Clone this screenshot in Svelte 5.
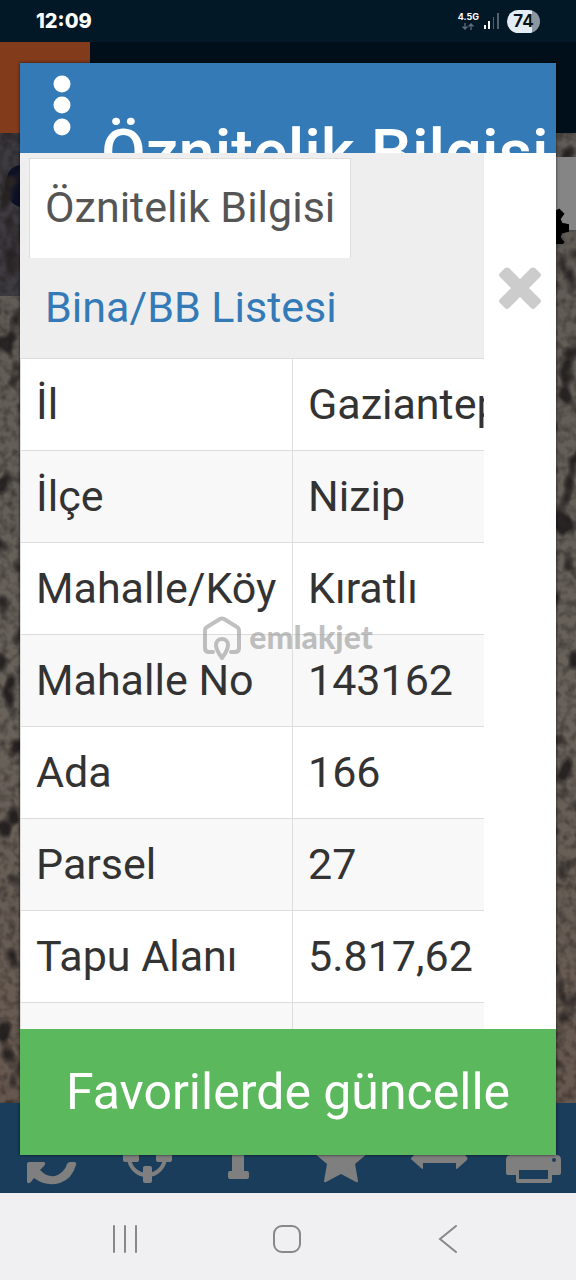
<script>
  const rows = [
    { label: "İl", value: "Gaziantep" },
    { label: "İlçe", value: "Nizip" },
    { label: "Mahalle/Köy", value: "Kıratlı" },
    { label: "Mahalle No", value: "143162" },
    { label: "Ada", value: "166" },
    { label: "Parsel", value: "27" },
    { label: "Tapu Alanı", value: "5.817,62" },
    { label: "", value: "" },
  ];
  const tabs = ["Öznitelik Bilgisi", "Bina/BB Listesi"];
  let active = $state(0);
</script>

<div class="screen">
  <header class="status">
    <span class="time">12:09</span>
    <span class="network">
      4.5G
      <svg width="12" height="7" viewBox="0 0 12 7" fill="none" stroke="#5d6f7b" stroke-width="1.3">
        <path d="M3 0v6M0.500 3.500L3 6l2.500-2.500M9 7V1M6.500 3.500L9 1l2.500 2.500" />
      </svg>
    </span>
    <svg class="signal" width="15" height="17" viewBox="0 0 15 17">
      <path d="M0 12h2v4H0zM4 8h2v8H4z" fill="#fff" />
      <path d="M9 4h1v12H9zM13 0h2v16h-2z" fill="#52616b" />
    </svg>
    <span class="battery">74</span>
  </header>

  <main>
    <div class="topbar"><div class="logo"></div></div>
    <div class="map">
      <svg class="ground" width="100%" height="100%" aria-hidden="true">
        <defs>
          <linearGradient id="soil" x1="0" y1="0" x2="0" y2="1">
            <stop offset="0" stop-color="#5f5a55" />
            <stop offset="0.6" stop-color="#68625a" />
            <stop offset="1" stop-color="#67584f" />
          </linearGradient>
          <filter id="bushes" x="0" y="0" width="100%" height="100%" color-interpolation-filters="sRGB">
            <feTurbulence type="fractalNoise" baseFrequency="0.045 0.035" numOctaves="2" seed="7" />
            <feColorMatrix values="0 0 0 0 0.16  0 0 0 0 0.14  0 0 0 0 0.14  6 0 0 0 -3.3" />
          </filter>
          <filter id="grain" x="0" y="0" width="100%" height="100%" color-interpolation-filters="sRGB">
            <feTurbulence type="fractalNoise" baseFrequency="0.12" numOctaves="2" seed="3" />
            <feColorMatrix values="0 0 0 0 0.1  0 0 0 0 0.09  0 0 0 0 0.08  1 0 0 0 -0.4" />
          </filter>
        </defs>
        <rect width="100%" height="100%" fill="url(#soil)" />
        <rect width="30" height="163" fill="#3d3a41" />
        <path d="M20 32q-14 2-14 20t14 22z" fill="#0b1027" />
        <rect width="100%" height="100%" filter="url(#bushes)" />
        <rect width="100%" height="100%" filter="url(#grain)" />
      </svg>
      <button class="settings" aria-label="Ayarlar">
        <svg width="60" height="100" viewBox="0 0 60 100">
          <path
            d="M24 48h10l2 8 5 2 7-4 7 7-5 7 2 5 9 2v10l-9 2-2 5 5 7-7 7-7-4-5 2-2 8H24l-2-8-5-2-7 4-7-7 4-7-2-5-8-2V75l8-2 2-5-4-7 7-7 7 4 5-2z"
            transform="translate(29 84) scale(0.75) translate(-29 -80)"
          />
        </svg>
      </button>
    </div>

    <nav class="toolbar">
      <button aria-label="Yenile">
        <svg width="96" height="90" viewBox="0 0 96 90">
          <path d="M27 61q0-2 2-2h14q4 0 1 4l-4 4q12 12 23 1 3-3 4-7 1-2 3-2h4q3 0 2 3-4 14-16 18-14 4-26-5l-3 4q-4 3-4-1z" />
        </svg>
      </button>
      <button aria-label="Konum">
        <svg width="96" height="90" viewBox="0 0 96 90">
          <circle cx="51" cy="54" r="18" fill="none" stroke="#7f7f7f" stroke-width="4" />
          <path d="M27 50h16v7q0 2-2 2H29q-2 0-2-2zM60 50h16v7q0 2-2 2H62q-2 0-2-2zM49 63h5q2 0 2 2v13q0 2-2 2h-5q-2 0-2-2V65q0-2 2-2zM47 28h9v16h-9z" />
        </svg>
      </button>
      <button aria-label="Bilgi">
        <svg width="96" height="90" viewBox="0 0 96 90">
          <path d="M36 42h16v26h3q2 0 2 2v4q0 2-2 2H38q-2 0-2-2v-4q0-2 2-2h2V50h-4zM40 26h12v10H40z" />
        </svg>
      </button>
      <button aria-label="Favoriler">
        <svg width="96" height="90" viewBox="0 0 96 90">
          <path d="M53 30l8 16 18 2q2 1 1 2L67 61l3 17q0 2-2 1l-15-8-15 8q-2 1-2-1l3-17-13-11q-1-1 1-2l18-2z" />
        </svg>
      </button>
      <button aria-label="Ölçüm">
        <svg width="96" height="90" viewBox="0 0 96 90">
          <path d="M28 54l9-9h2v6h33v-6h2l9 9q1 2 0 3l-9 8q-2 2-2 0v-5H39v5q0 2-2 0l-9-8q-2-1 0-3z" />
        </svg>
      </button>
      <button aria-label="Yazdır">
        <svg width="96" height="90" viewBox="0 0 96 90">
          <path
            fill-rule="evenodd"
            d="M36 36h36v16h4q5 0 5 5v13q0 2-2 2h-7v6q0 2-2 2H38q-2 0-2-2v-6h-8q-2 0-2-2V57q0-5 5-5h5zM40 40v12h28V40zM39 67v9h29v-9zM76 57a2 2 0 1 0-4 0a2 2 0 1 0 4 0z"
          />
        </svg>
      </button>
    </nav>

    <section class="dialog">
      <div class="dialog-head">
        <button class="menu" aria-label="Menü">
          <svg width="18" height="62" viewBox="0 0 18 62" fill="#fff">
            <circle cx="9" cy="9" r="8.500" />
            <circle cx="9" cy="30" r="8.500" />
            <circle cx="9" cy="52" r="8.500" />
          </svg>
        </button>
        <h1>Öznitelik Bilgisi</h1>
      </div>

      <div class="dialog-body">
        <div class="content">
          <div class="tabs">
            {#each tabs as tab, i}
              <button class="tab" class:active={active === i} onclick={() => (active = i)}>
                {tab}
              </button>
            {/each}
          </div>
          <table>
            <tbody>
              {#each rows as row}
                <tr>
                  <th scope="row">{row.label}</th>
                  <td>{row.value}</td>
                </tr>
              {/each}
            </tbody>
          </table>
        </div>
        <div class="side">
          <button class="close" aria-label="Kapat">
            <svg width="44" height="44" viewBox="0 0 44 44">
              <path
                d="M7 2q2-1 4 0l11 11L33 2q2-1 4 0l5 5q2 2 0 4L31 22l11 11q2 2 0 4l-5 5q-2 2-4 0L22 31 11 42q-2 2-4 0l-5-5q-2-2 0-4l11-11L2 11Q0 9 2 7z"
                fill="#ccc"
              />
            </svg>
          </button>
        </div>
      </div>

      <button class="update">Favorilerde güncelle</button>
    </section>

    <div class="watermark">
      <svg width="38" height="46" viewBox="0 0 38 46" fill="none" stroke="currentColor" stroke-width="4" stroke-linecap="round" stroke-linejoin="round">
        <path d="M10 36H6q-4 0-4-4V15q0-3 2-4L17 3q2-1 4 0l13 8q2 1 2 4v17q0 4-4 4h-4" />
        <path d="M19 42q-6-8-6-13a6 6 0 0 1 12 0q0 5-6 13z" />
      </svg>
      <span>emlakjet</span>
    </div>
  </main>

  <footer class="phone-nav">
    <button aria-label="Son uygulamalar">
      <svg width="30" height="30" viewBox="0 0 30 30"><path d="M4 2v26M15 2v26M26 2v26" /></svg>
    </button>
    <button aria-label="Ana ekran">
      <svg width="30" height="30" viewBox="0 0 30 30"><rect x="2" y="2" width="26" height="26" rx="8" /></svg>
    </button>
    <button aria-label="Geri">
      <svg width="30" height="30" viewBox="0 0 30 30"><path d="M23 2L7 15l16 13" /></svg>
    </button>
  </footer>
</div>

<style>
  :global(body) {
    margin: 0;
  }
  .screen {
    height: 100vh;
    display: flex;
    flex-direction: column;
    font-family: Roboto, "Liberation Sans", sans-serif;
    overflow: hidden;
  }
  button {
    border: 0;
    padding: 0;
    margin: 0;
    background: none;
    font: inherit;
    cursor: pointer;
  }
  svg {
    display: block;
  }

  .status {
    height: 42px;
    box-sizing: border-box;
    padding: 0 36px;
    display: flex;
    align-items: center;
    background: #021827;
    color: #fff;
    font-family: Inter, sans-serif;
  }
  .time {
    flex: 1;
    font-size: 20px;
    font-weight: 800;
  }
  .network {
    display: flex;
    flex-direction: column;
    align-items: center;
    gap: 1px;
    font-size: 9px;
    line-height: 10px;
    font-weight: 700;
  }
  .signal {
    margin: 0 8px 0 5px;
  }
  .battery {
    width: 33px;
    height: 23px;
    border-radius: 12px;
    background: linear-gradient(90deg, #e3ecf4 75%, #8b969f 75%);
    color: #06121c;
    font-size: 17px;
    line-height: 23px;
    font-weight: 700;
    text-align: center;
  }

  main {
    flex: 1;
    min-height: 0;
    position: relative;
    display: flex;
    flex-direction: column;
  }
  .topbar {
    height: 91px;
    background: #000f19;
  }
  .logo {
    width: 90px;
    height: 100%;
    background: #823b1b;
  }
  .map {
    flex: 1;
    min-height: 0;
    position: relative;
    overflow: hidden;
  }
  .settings {
    position: absolute;
    top: 24px;
    right: 0;
    width: 60px;
    height: 73px;
    display: flex;
    align-items: center;
    background: #858585;
  }
  .settings svg {
    flex: none;
  }
  .toolbar {
    height: 90px;
    display: flex;
    background: #1a3d5c;
  }
  .toolbar button {
    flex: 1;
    fill: #7f7f7f;
  }

  .dialog {
    position: absolute;
    top: 21px;
    left: 20px;
    right: 20px;
    bottom: 38px;
    display: flex;
    flex-direction: column;
    background: #fff;
    box-shadow: 0 0 3px rgba(0, 0, 0, 0.7);
  }
  .dialog-head {
    height: 90px;
    display: flex;
    overflow: hidden;
    background: #337ab7;
    color: #fff;
  }
  .menu {
    height: 62px;
    margin: 12px 0 0 33px;
  }
  h1 {
    margin: 54px 0 0 30px;
    font-size: 65px;
    line-height: 72px;
    font-weight: 500;
    white-space: nowrap;
  }
  .dialog-body {
    flex: 1;
    min-height: 0;
    display: flex;
    overflow: hidden;
    font-size: 43px;
    line-height: 62px;
  }
  .content {
    flex: 1;
    min-width: 0;
    overflow: hidden;
  }
  .side {
    width: 72px;
    display: flex;
    justify-content: center;
    align-items: flex-start;
  }
  .close {
    margin-top: 113px;
  }

  .tabs {
    display: flex;
    flex-direction: column;
    align-items: flex-start;
    padding: 5px 9px 0;
    background: #eee;
    border-bottom: 1px solid #ddd;
  }
  .tab {
    padding: 17px 15px 20px;
    border: 1px solid transparent;
    border-bottom: 0;
    color: #337ab7;
    white-space: nowrap;
  }
  .tab.active {
    background: #fff;
    border-color: #ddd;
    color: #555;
  }

  table {
    width: 536px;
    border-collapse: collapse;
    color: #333;
  }
  th,
  td {
    height: 61px;
    padding: 15px;
    border: 1px solid #ddd;
    font-weight: 400;
    line-height: 61px;
    text-align: left;
    white-space: nowrap;
  }
  th {
    width: 241px;
  }
  tr:first-child > * {
    border-top: 0;
  }
  tr:nth-child(even) {
    background: #f8f8f8;
  }

  .update {
    height: 126px;
    background: #5cb85c;
    color: #fff;
    font-size: 50px;
    white-space: nowrap;
  }

  .watermark {
    position: absolute;
    top: 574px;
    left: 0;
    right: 0;
    display: flex;
    justify-content: center;
    align-items: center;
    gap: 8px;
    color: rgba(150, 150, 150, 0.6);
    font-family: Lato, sans-serif;
    font-size: 32px;
    line-height: 40px;
    font-weight: 900;
    pointer-events: none;
  }
  .watermark span {
    padding-bottom: 4px;
  }

  .phone-nav {
    height: 87px;
    box-sizing: border-box;
    padding: 4px 47px 0 44px;
    display: flex;
    align-items: center;
    background: #f0f0f2;
  }
  .phone-nav button {
    flex: 1;
    display: flex;
    justify-content: center;
  }
  .phone-nav svg {
    fill: none;
    stroke: #88888b;
    stroke-width: 2;
    stroke-linecap: round;
  }
</style>
